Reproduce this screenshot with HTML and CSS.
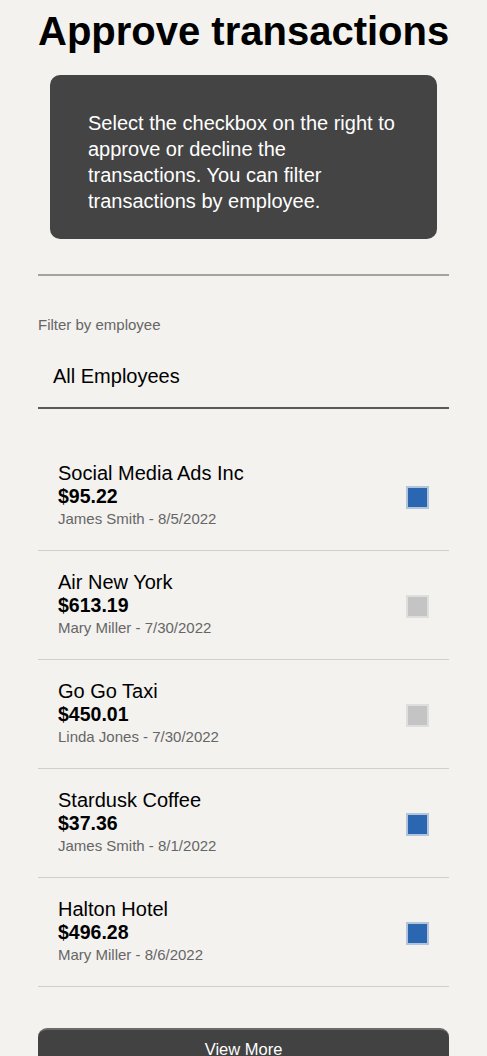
FILE: index.html
```html
<!DOCTYPE html>
<html lang="en">
<head>
<meta charset="utf-8">
<title>Approve transactions</title>
<link rel="stylesheet" href="styles.css">
</head>
<body>
<main class="page">
  <h1 class="title">Approve transactions</h1>
  <div class="info">Select the checkbox on the right to approve or decline the transactions. You can filter transactions by employee.</div>
  <hr class="rule">
  <div class="filter">
    <label class="filter-label">Filter by employee</label>
    <div class="filter-select">All Employees</div>
  </div>
  <ul class="list">
    <li class="item">
      <div class="item-text">
        <div class="item-name">Social Media Ads Inc</div>
        <div class="item-amount">$95.22</div>
        <div class="item-meta">James Smith - 8/5/2022</div>
      </div>
      <span class="check checked"></span>
    </li>
    <li class="item">
      <div class="item-text">
        <div class="item-name">Air New York</div>
        <div class="item-amount">$613.19</div>
        <div class="item-meta">Mary Miller - 7/30/2022</div>
      </div>
      <span class="check"></span>
    </li>
    <li class="item">
      <div class="item-text">
        <div class="item-name">Go Go Taxi</div>
        <div class="item-amount">$450.01</div>
        <div class="item-meta">Linda Jones - 7/30/2022</div>
      </div>
      <span class="check"></span>
    </li>
    <li class="item">
      <div class="item-text">
        <div class="item-name">Stardusk Coffee</div>
        <div class="item-amount">$37.36</div>
        <div class="item-meta">James Smith - 8/1/2022</div>
      </div>
      <span class="check checked"></span>
    </li>
    <li class="item">
      <div class="item-text">
        <div class="item-name">Halton Hotel</div>
        <div class="item-amount">$496.28</div>
        <div class="item-meta">Mary Miller - 8/6/2022</div>
      </div>
      <span class="check checked"></span>
    </li>
  </ul>
  <button class="more">View More</button>
</main>
</body>
</html>
```
FILE: styles.css
```css
html, body {
  margin: 0;
  padding: 0;
  background: #f3f2ef;
}
body {
  font-family: "Liberation Sans", Arial, sans-serif;
  color: #000;
}
.page {
  width: 411px;
  margin: 0 auto;
  padding-top: 8px;
}
.title {
  margin: 0;
  font-size: 40px;
  line-height: 46px;
  font-weight: bold;
  text-align: center;
  white-space: nowrap;
}
.info {
  margin: 21px 12px 0;
  background: #444444;
  color: #fff;
  border-radius: 10px;
  padding: 35px 38px 25px;
  font-size: 20px;
  line-height: 26px;
}
.rule {
  margin: 35px 0 0;
  border: 0;
  height: 2px;
  background: #a3a3a3;
}
.filter {
  margin-top: 40px;
}
.filter-label {
  display: block;
  font-size: 15px;
  line-height: 18px;
  color: #666;
}
.filter-select {
  margin-top: 30px;
  padding: 0 15px 19px;
  font-size: 20px;
  line-height: 24px;
  border-bottom: 2px solid #5a5a5a;
}
.list {
  list-style: none;
  margin: 33px 0 0;
  padding: 0;
}
.item {
  display: flex;
  align-items: center;
  justify-content: space-between;
  padding: 20px 20px;
  border-bottom: 1px solid #cfcfcf;
}
.item-name {
  font-size: 20px;
  line-height: 23px;
}
.item-amount {
  font-size: 19.5px;
  line-height: 23px;
  font-weight: bold;
}
.item-meta {
  font-size: 15px;
  line-height: 22px;
  color: #666;
}
.check {
  width: 19px;
  height: 19px;
  background: #c4c4c4;
  border: 2px solid #dedede;
  flex: none;
  margin-top: 2px;
}
.check.checked {
  background: #2a67b0;
  border-color: #b3c5da;
}
.more {
  display: block;
  width: 100%;
  margin-top: 41px;
  height: 44px;
  background: #424242;
  color: #fff;
  border: 0;
  border-top: 2px solid #6a6a6a;
  border-radius: 9px;
  font-family: "Liberation Sans", Arial, sans-serif;
  font-size: 16.5px;
  padding: 0;
  padding-bottom: 4px;
}
```
